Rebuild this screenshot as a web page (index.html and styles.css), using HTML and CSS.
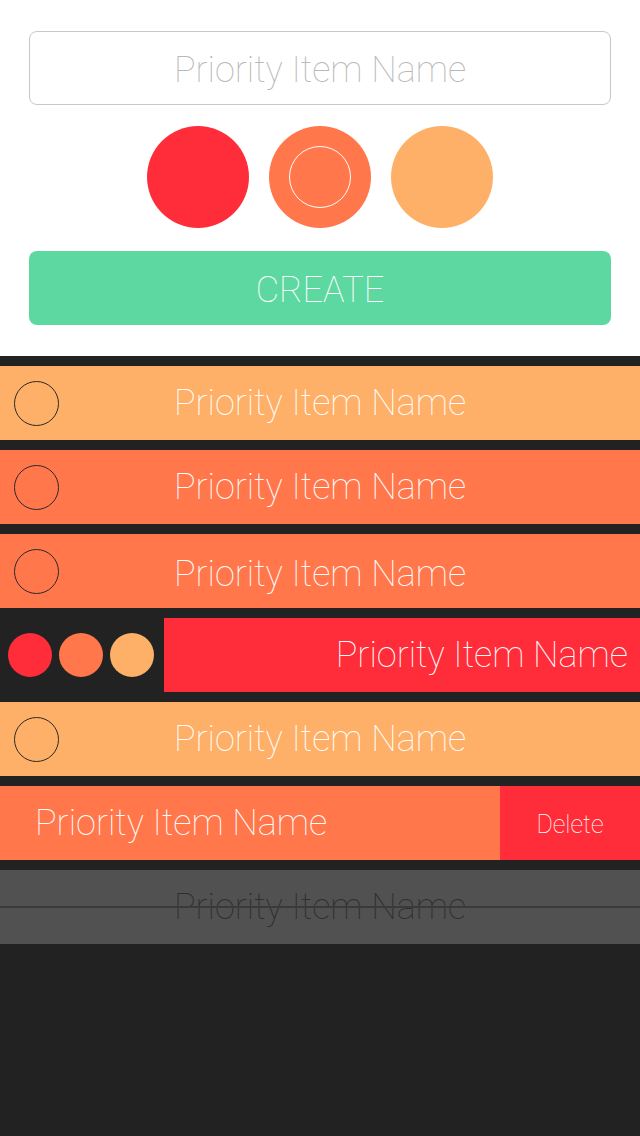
FILE: index.html
```html
<!DOCTYPE html>
<html>
<head>
<meta charset="utf-8">
<link rel="stylesheet" href="styles.css">
</head>
<body>
<div class="top">
  <div class="input">Priority Item Name</div>
  <div class="pickers">
    <div class="pick red"></div>
    <div class="pick orange selected"><div class="ring"></div></div>
    <div class="pick light"></div>
  </div>
  <div class="create">CREATE</div>
</div>
<div class="list">
  <div class="row light"><div class="check"></div><div class="label">Priority Item Name</div></div>
  <div class="row orange"><div class="check"></div><div class="label">Priority Item Name</div></div>
  <div class="row orange"><div class="check"></div><div class="label low">Priority Item Name</div></div>
  <div class="row swap">
    <div class="dots">
      <div class="dot red"></div>
      <div class="dot orange"></div>
      <div class="dot light"></div>
    </div>
    <div class="shifted red"><span class="label-r">Priority Item Name</span></div>
  </div>
  <div class="row light"><div class="check"></div><div class="label">Priority Item Name</div></div>
  <div class="row del">
    <div class="del-main orange"><span>Priority Item Name</span></div>
    <div class="del-btn red">Delete</div>
  </div>
  <div class="row done"><div class="label dim">Priority Item Name</div></div>
</div>
</body>
</html>
```
FILE: styles.css
```css
* { box-sizing: border-box; }
html, body { margin: 0; padding: 0; }
body {
  width: 640px;
  height: 1136px;
  background: #222222;
  font-family: "Roboto", "Liberation Sans", sans-serif;
  font-weight: 100;
  overflow: hidden;
}
.red { background: #ff2d3a; }
.orange { background: #ff774b; }
.light { background: #feb068; }

.top {
  background: #ffffff;
  padding: 31px 29px 31px 29px;
  display: flex;
  flex-direction: column;
}
.input {
  height: 74px;
  border: 1px solid #c8c8c8;
  border-radius: 8px;
  display: flex;
  align-items: center;
  justify-content: center;
  padding-top: 4px;
  color: #b8b8b8;
  font-size: 36px;
}
.pickers {
  display: flex;
  justify-content: center;
  gap: 20px;
  margin-top: 21px;
}
.pick {
  width: 102px;
  height: 102px;
  border-radius: 50%;
  display: flex;
  align-items: center;
  justify-content: center;
}
.ring {
  width: 62px;
  height: 62px;
  border: 1px solid #ffffff;
  border-radius: 50%;
}
.create {
  margin-top: 23px;
  height: 74px;
  background: #5dd8a0;
  border-radius: 8px;
  color: #ffffff;
  font-size: 36px;
  display: flex;
  align-items: center;
  justify-content: center;
  padding-top: 3px;
}

.list {
  padding-top: 10px;
  display: flex;
  flex-direction: column;
  gap: 10px;
}
.row {
  height: 74px;
  display: flex;
  align-items: center;
  position: relative;
  color: #ffffff;
  font-size: 36px;
}
.check {
  position: absolute;
  left: 14px;
  top: 15px;
  width: 45px;
  height: 45px;
  border: 1px solid #2a2a2a;
  border-radius: 50%;
}
.label {
  flex: 1;
  text-align: center;
}
.label.low { padding-top: 6px; }
.swap { background: transparent; }
.dots {
  width: 164px;
  display: flex;
  gap: 7px;
  padding-left: 8px;
}
.dot {
  width: 44px;
  height: 44px;
  border-radius: 50%;
}
.shifted {
  flex: 1;
  height: 100%;
  display: flex;
  align-items: center;
  justify-content: flex-end;
  padding-right: 12px;
}
.del-main {
  flex: 1;
  height: 100%;
  display: flex;
  align-items: center;
  padding-left: 35px;
}
.del-btn {
  width: 140px;
  height: 100%;
  display: flex;
  align-items: center;
  justify-content: center;
  font-size: 25px;
  padding-top: 2px;
}
.done { background: #515151; }
.done::after {
  content: "";
  position: absolute;
  left: 0;
  right: 0;
  top: 36px;
  height: 2px;
  background: #3a3a3a;
}
.dim { color: #2e2e2e; }
```
